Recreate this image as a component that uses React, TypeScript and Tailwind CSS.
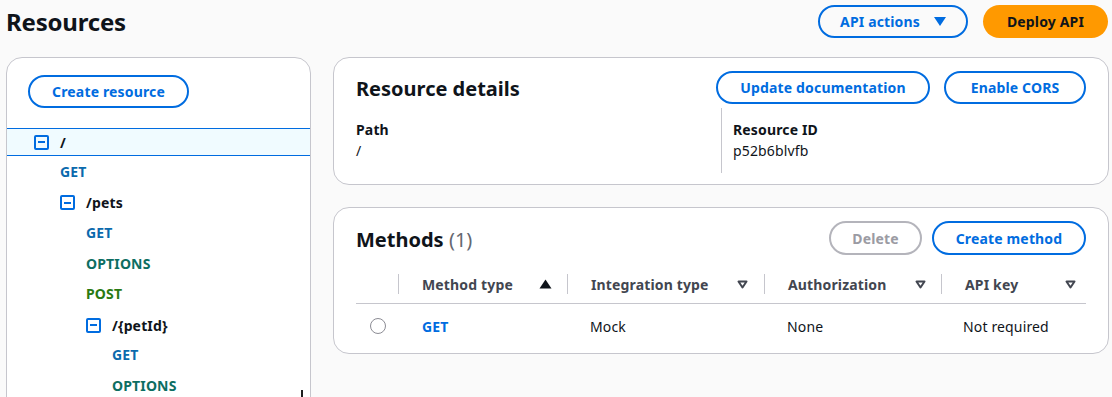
import React from "react";

const BLUE = "#006ce0";

function TreeIcon() {
  return (
    <span className="flex h-[15px] w-[15px] shrink-0 items-center justify-center rounded-[2px] border-2 border-[#006ce0]">
      <span className="h-[2px] w-[7px] bg-[#006ce0]" />
    </span>
  );
}

function ResourceRow({ indent, label, selected }: { indent: number; label: string; selected?: boolean }) {
  if (selected) {
    return (
      <div
        className="flex h-[28px] items-center gap-[11px] border-y border-[#006ce0] bg-[#f0fbff]"
        style={{ paddingLeft: 27 + indent * 26 }}
      >
        <TreeIcon />
        <span className="text-[14px] font-bold text-[#0f141a]">{label}</span>
      </div>
    );
  }
  return (
    <div className="flex h-[30.6px] items-center gap-[11px] pt-[2px]" style={{ paddingLeft: 27 + indent * 26 }}>
      <TreeIcon />
      <span className="text-[14px] font-bold text-[#0f141a]">{label}</span>
    </div>
  );
}

function MethodRow({ indent, label }: { indent: number; label: string }) {
  const color =
    label === "GET" ? "text-[#0b6aad]" : label === "OPTIONS" ? "text-[#0d6e62]" : "text-[#2a7a12]";
  return (
    <div className="flex h-[30.6px] items-center" style={{ paddingLeft: 53 + indent * 26 }}>
      <span className={`text-[14px] font-bold ${color}`}>{label}</span>
    </div>
  );
}

function Caret() {
  return (
    <svg width="11" height="9" viewBox="0 0 11 9" className="shrink-0">
      <path d="M1.5 1.5 H9.5 L5.5 7.5 Z" fill="none" stroke="#424650" strokeWidth="2" strokeLinejoin="round" />
    </svg>
  );
}

function SortUp() {
  return (
    <svg width="13" height="10" viewBox="0 0 13 10" className="shrink-0">
      <path d="M0.5 9.5 H12.5 L6.5 0.5 Z" fill="#0f141a" />
    </svg>
  );
}

function HeaderCell({ label, width, icon, pr }: { label: string; width: number; icon: React.ReactNode; pr: number }) {
  return (
    <div className="flex h-[20px] items-center justify-between border-l border-[#c6c6cd] pl-[23px]" style={{ width, paddingRight: pr }}>
      <span className="text-[14px] font-bold text-[#424650]">{label}</span>
      {icon}
    </div>
  );
}

export default function App() {
  return (
    <div
      className="relative h-[397px] w-[1112px] overflow-hidden bg-[#fafafa] tracking-[0.15px] text-[#0f141a]"
      style={{ fontFamily: '"Noto Sans", "Open Sans", sans-serif' }}
    >
      {/* Top bar */}
      <div className="flex h-[38px] items-center justify-between pl-[6px] pr-[4px] pt-[5px]">
        <h1 className="text-[24px] font-bold leading-[30px] tracking-[-0.2px] text-[#0f141a]">Resources</h1>
        <div className="flex items-center gap-[15px]">
          <button className="flex h-[33px] w-[150px] items-center justify-center gap-[14px] rounded-full border-2 border-[#006ce0] text-[14px] font-bold text-[#006ce0]">
            API actions
            <svg width="12" height="9" viewBox="0 0 12 9">
              <path d="M0 0 H12 L6 9 Z" fill={BLUE} />
            </svg>
          </button>
          <button className="flex h-[33px] w-[125px] items-center justify-center rounded-full bg-[#ff9900] text-[14px] font-bold text-[#0f141a]">
            Deploy API
          </button>
        </div>
      </div>

      {/* Main */}
      <div className="mt-[19px] flex gap-[22px] pl-[6px] pr-[3px]">
        {/* Left panel */}
        <div className="relative h-[380px] w-[305px] shrink-0 rounded-[16px] border border-[#c6c6cd] bg-white">
          <div className="pl-[21px] pt-[17px]">
            <button className="flex h-[33px] w-[161px] items-center justify-center rounded-full border-2 border-[#006ce0] text-[14px] font-bold text-[#006ce0]">
              Create resource
            </button>
          </div>
          <div className="mt-[20px]">
            <ResourceRow indent={0} label="/" selected />
            <MethodRow indent={0} label="GET" />
            <ResourceRow indent={1} label="/pets" />
            <MethodRow indent={1} label="GET" />
            <MethodRow indent={1} label="OPTIONS" />
            <MethodRow indent={1} label="POST" />
            <ResourceRow indent={2} label="/{petId}" />
            <MethodRow indent={2} label="GET" />
            <MethodRow indent={2} label="OPTIONS" />
          </div>
          <div className="absolute left-[294px] top-[332px] h-[10px] w-[2px] bg-[#1f1f1f]" />
        </div>

        {/* Right column */}
        <div className="flex flex-1 flex-col gap-[22px]">
          {/* Resource details */}
          <div className="h-[128px] rounded-[16px] border border-[#c6c6cd] bg-white px-[22px] pt-[13px]">
            <div className="flex h-[33px] items-center justify-between">
              <h2 className="pt-[3px] text-[20px] font-bold leading-[24px] tracking-[0px] text-[#0f141a]">Resource details</h2>
              <div className="flex gap-[14px]">
                <button className="flex h-[33px] w-[214px] items-center justify-center rounded-full border-2 border-[#006ce0] text-[14px] font-bold text-[#006ce0]">
                  Update documentation
                </button>
                <button className="flex h-[33px] w-[142px] items-center justify-center rounded-full border-2 border-[#006ce0] text-[14px] font-bold text-[#006ce0]">
                  Enable CORS
                </button>
              </div>
            </div>
            <div className="mt-[4px] grid h-[65px] grid-cols-2">
              <div className="pt-[12px]">
                <div className="text-[14px] font-bold leading-[20px]">Path</div>
                <div className="text-[14px] leading-[22px]">/</div>
              </div>
              <div className="border-l border-[#c6c6cd] pl-[11px] pt-[12px]">
                <div className="text-[14px] font-bold leading-[20px]">Resource ID</div>
                <div className="text-[14px] leading-[22px]">p52b6blvfb</div>
              </div>
            </div>
          </div>

          {/* Methods */}
          <div className="h-[147px] rounded-[16px] border border-[#c6c6cd] bg-white pl-[22px] pr-[22px] pt-[13px]">
            <div className="flex h-[34px] items-center justify-between">
              <h2 className="pt-[4px] text-[20px] font-bold leading-[24px] tracking-[0px] text-[#0f141a]">
                Methods <span className="font-normal text-[#656871]">(1)</span>
              </h2>
              <div className="flex gap-[10px]">
                <button className="flex h-[34px] w-[93px] items-center justify-center rounded-full border-2 border-[#b4b4bb] text-[14px] font-bold text-[#9b9ba3]">
                  Delete
                </button>
                <button className="flex h-[34px] w-[154px] items-center justify-center rounded-full border-2 border-[#006ce0] text-[14px] font-bold text-[#006ce0]">
                  Create method
                </button>
              </div>
            </div>
            {/* Table header */}
            <div className="mt-[19px] flex h-[30px] items-start border-b border-[#c6c6cd]">
              <div className="h-[20px] w-[42px]" />
              <HeaderCell label="Method type" width={169} icon={<SortUp />} pr={15} />
              <HeaderCell label="Integration type" width={197} icon={<Caret />} pr={16} />
              <HeaderCell label="Authorization" width={177} icon={<Caret />} pr={15} />
              <HeaderCell label="API key" width={145} icon={<Caret />} pr={10} />
            </div>
            {/* Row */}
            <div className="flex h-[44px] items-center text-[14px]">
              <div className="flex w-[42px] justify-center pl-[2px]">
                <span className="h-[16px] w-[16px] rounded-full border-[1.5px] border-[#8c8c94]" />
              </div>
              <div className="w-[169px] pl-[24px] font-bold text-[#006ce0]">GET</div>
              <div className="w-[197px] pl-[23px]">Mock</div>
              <div className="w-[177px] pl-[23px]">None</div>
              <div className="w-[145px] pl-[22px]">Not required</div>
            </div>
          </div>
        </div>
      </div>
    </div>
  );
}
